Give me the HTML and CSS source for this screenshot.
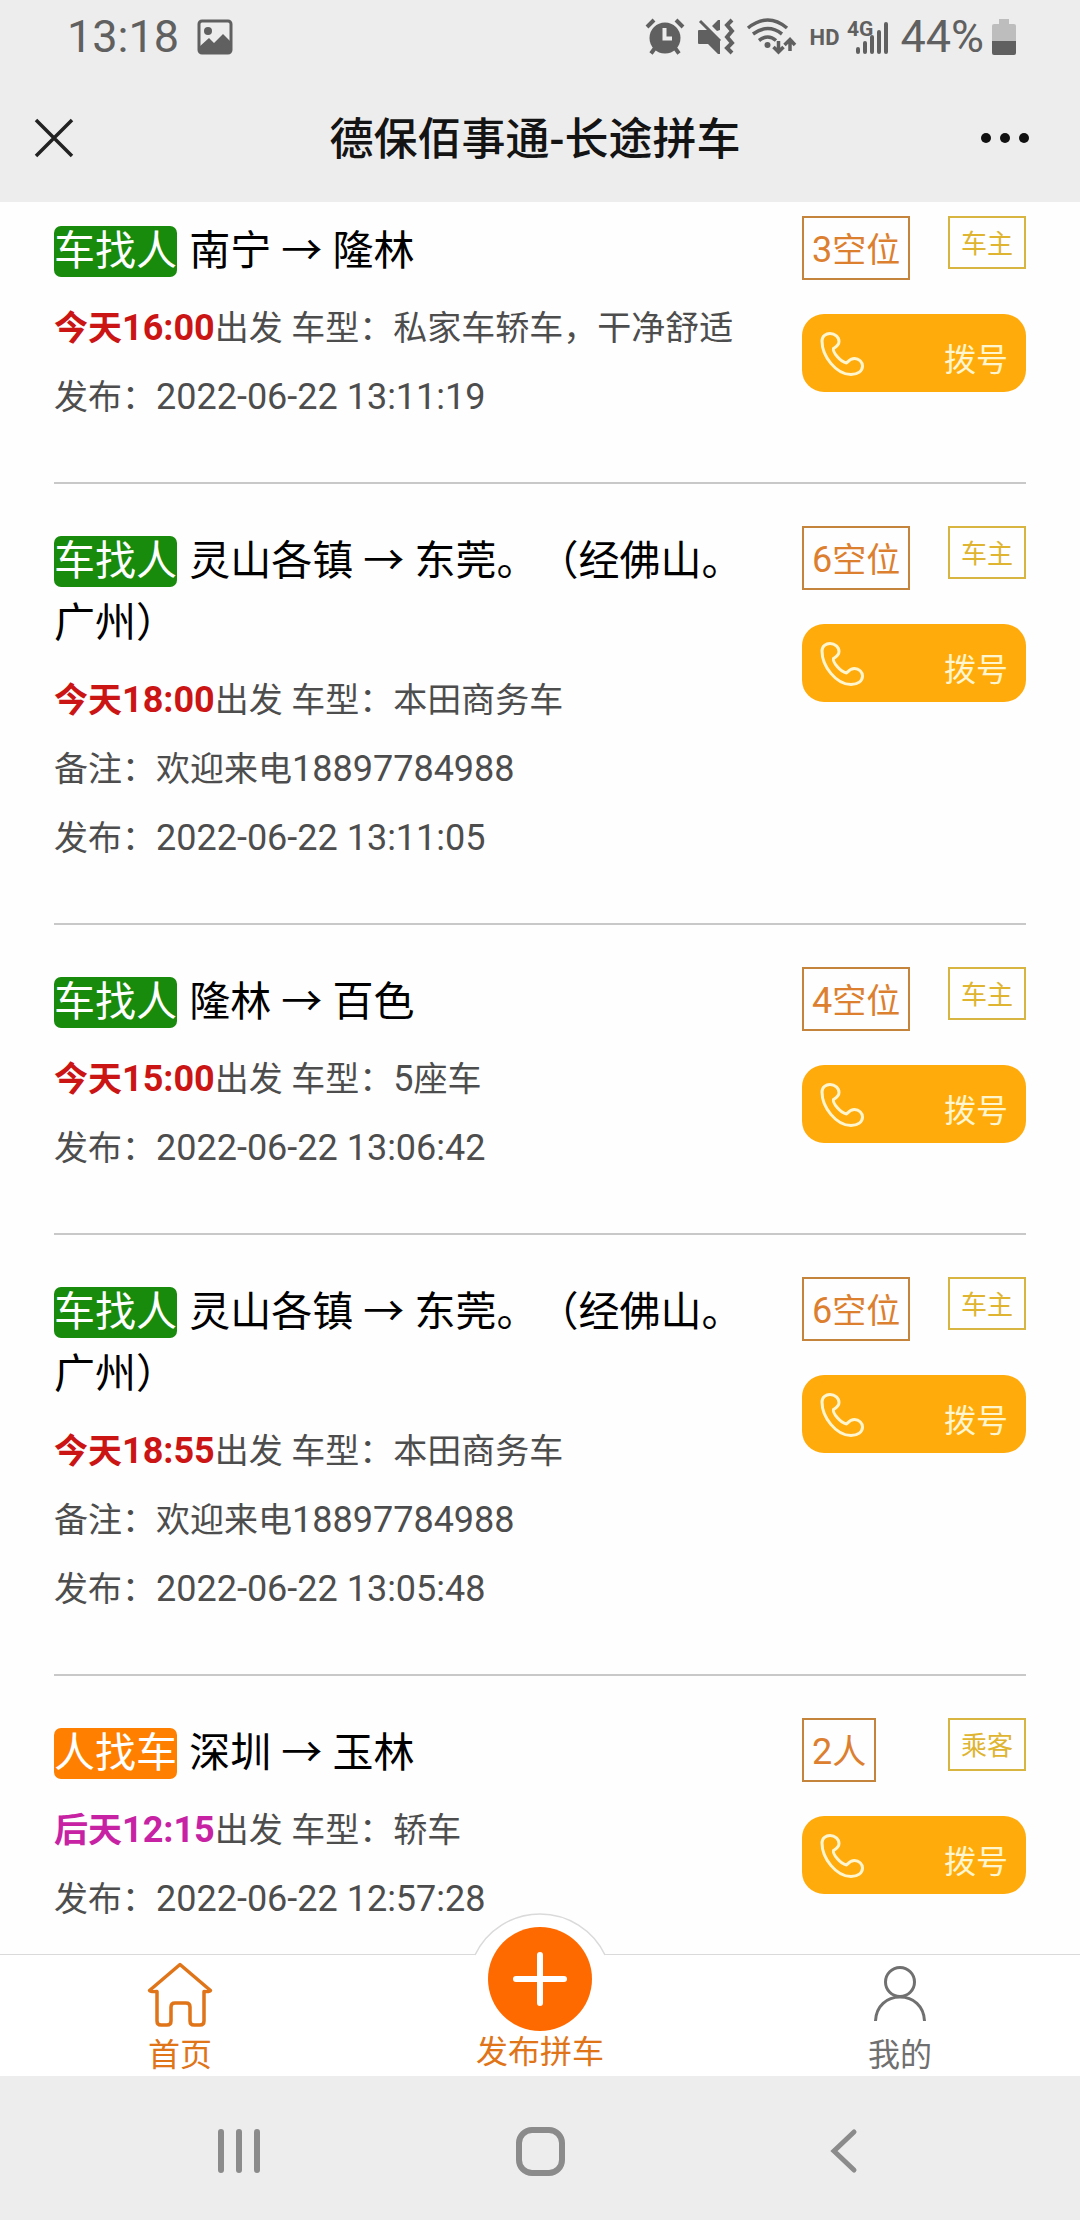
FILE: index.html
```html
<!DOCTYPE html>
<html lang="zh-CN">
<head>
<meta charset="utf-8">
<meta name="viewport" content="width=device-width, initial-scale=1">
<title>德保佰事通-长途拼车</title>
<link rel="stylesheet" href="styles.css">
</head>
<body>
<svg class="defs" aria-hidden="true">
  <symbol id="phone" viewBox="0 0 44 44">
    <path d="M2 9C2 4 6 1.500 10 1.500C15 1.500 19 5 19 9.500C19 13 16 15 13.500 16.500C12.500 20 20 29.500 26.500 31C28.500 29 30.500 26.500 34.500 26.500C39 26.500 42.500 30 42.500 34C42.500 39 38 42.500 31 42.500C16 42.500 2 24 2 9Z" fill="none" stroke="currentColor" stroke-width="3" stroke-linejoin="round"/>
  </symbol>
</svg>

<div class="status">
  <span class="status-time">13:18</span>
  <svg class="status-photo" width="36" height="36" viewBox="0 0 36 36" aria-hidden="true">
    <rect x="2" y="2" width="32" height="32" rx="3" fill="none" stroke="currentColor" stroke-width="3"/>
    <circle cx="11" cy="12" r="4" fill="currentColor"/>
    <path d="M2 28L12 19L17 24L26 15L34 23V34H2Z" fill="currentColor"/>
  </svg>
  <div class="status-icons">
    <svg width="44" height="38" viewBox="0 0 44 38" aria-hidden="true">
      <path d="M6 35.500L10 30M34 35.500L30 30M2 9L9 2M38 9L31 2" stroke="currentColor" stroke-width="4" fill="none"/>
      <circle cx="20" cy="20" r="15.500" fill="currentColor"/>
      <path d="M19.500 10V20.500H27" stroke="#ededed" stroke-width="4" fill="none"/>
    </svg>
    <svg width="41" height="38" viewBox="0 0 41 38" aria-hidden="true">
      <path d="M1 13Q1 12 2 12H12L23 23V36H21L11 26H2Q1 26 1 25ZM15 8L21 2H23V12L20 13Z" fill="currentColor"/>
      <path d="M3 3L23 23" stroke="currentColor" stroke-width="3"/>
      <path d="M35 2L30 7L35 13L30 19L35 25L30 30L35 35" fill="none" stroke="currentColor" stroke-width="4"/>
    </svg>
    <svg width="56" height="38" viewBox="0 0 56 38" aria-hidden="true">
      <g fill="none" stroke="currentColor" stroke-width="3.500">
        <path d="M2 10Q22 -6 41 10M7 16Q22 5 36 16M13 22.500Q22 15.500 30 22.500"/>
        <path d="M32.500 23V33M27.500 29L32.500 34L37.500 29M44 33V23M38.500 27L44 21.500L49 27"/>
      </g>
      <circle cx="21.500" cy="27" r="3" fill="currentColor"/>
    </svg>
    <span class="status-hd">HD</span>
    <svg width="45" height="38" viewBox="0 0 45 38" aria-hidden="true">
      <text x="0" y="18" class="net-label">4G</text>
      <path d="M11 31V34M18 25V34M25 19V34M32 14V34M39 6V34" fill="none" stroke="currentColor" stroke-width="4" stroke-linecap="round"/>
    </svg>
    <span class="status-power">44%</span>
    <svg width="24" height="38" viewBox="0 0 24 38" aria-hidden="true">
      <path d="M7 1H17V6H22Q24 6 24 8V23H0V8Q0 6 2 6H7Z" fill="#bdbdbd"/>
      <path d="M0 23H24V35Q24 37 22 37H2Q0 37 0 35Z" fill="currentColor"/>
    </svg>
  </div>
</div>

<header class="titlebar">
  <button class="icon-button" type="button" aria-label="关闭">
    <svg width="40" height="40" viewBox="0 0 40 40"><path d="M2 2L38 38M38 2L2 38" stroke="#222" stroke-width="3.500"/></svg>
  </button>
  <h1 class="title">德保佰事通-长途拼车</h1>
  <button class="icon-button" type="button" aria-label="更多">
    <svg width="50" height="12" viewBox="0 0 50 12"><g fill="#111"><circle cx="6" cy="6" r="5"/><circle cx="25" cy="6" r="5"/><circle cx="44" cy="6" r="5"/></g></svg>
  </button>
</header>

<main class="list">
  <article class="trip">
    <div class="info">
      <h2 class="route"><span class="kind">车找人</span> 南宁 → 隆林</h2>
      <p class="line"><strong class="when">今天<span class="num">16:00</span></strong>出发 车型：私家车轿车，干净舒适</p>
      <p class="line">发布：<time class="num">2022-06-22 13:11:19</time></p>
    </div>
    <div class="side">
      <div class="tags"><span class="seats"><span class="num">3</span>空位</span><span class="role">车主</span></div>
      <button class="call" type="button"><svg class="call-icon" aria-hidden="true"><use href="#phone"/></svg><span>拨号</span></button>
    </div>
  </article>

  <article class="trip">
    <div class="info">
      <h2 class="route"><span class="kind">车找人</span> 灵山各镇 → 东莞。（经佛山。广州）</h2>
      <p class="line"><strong class="when">今天<span class="num">18:00</span></strong>出发 车型：本田商务车</p>
      <p class="line">备注：欢迎来电<span class="num">18897784988</span></p>
      <p class="line">发布：<time class="num">2022-06-22 13:11:05</time></p>
    </div>
    <div class="side">
      <div class="tags"><span class="seats"><span class="num">6</span>空位</span><span class="role">车主</span></div>
      <button class="call" type="button"><svg class="call-icon" aria-hidden="true"><use href="#phone"/></svg><span>拨号</span></button>
    </div>
  </article>

  <article class="trip">
    <div class="info">
      <h2 class="route"><span class="kind">车找人</span> 隆林 → 百色</h2>
      <p class="line"><strong class="when">今天<span class="num">15:00</span></strong>出发 车型：<span class="num">5</span>座车</p>
      <p class="line">发布：<time class="num">2022-06-22 13:06:42</time></p>
    </div>
    <div class="side">
      <div class="tags"><span class="seats"><span class="num">4</span>空位</span><span class="role">车主</span></div>
      <button class="call" type="button"><svg class="call-icon" aria-hidden="true"><use href="#phone"/></svg><span>拨号</span></button>
    </div>
  </article>

  <article class="trip">
    <div class="info">
      <h2 class="route"><span class="kind">车找人</span> 灵山各镇 → 东莞。（经佛山。广州）</h2>
      <p class="line"><strong class="when">今天<span class="num">18:55</span></strong>出发 车型：本田商务车</p>
      <p class="line">备注：欢迎来电<span class="num">18897784988</span></p>
      <p class="line">发布：<time class="num">2022-06-22 13:05:48</time></p>
    </div>
    <div class="side">
      <div class="tags"><span class="seats"><span class="num">6</span>空位</span><span class="role">车主</span></div>
      <button class="call" type="button"><svg class="call-icon" aria-hidden="true"><use href="#phone"/></svg><span>拨号</span></button>
    </div>
  </article>

  <article class="trip">
    <div class="info">
      <h2 class="route"><span class="kind kind-rider">人找车</span> 深圳 → 玉林</h2>
      <p class="line"><strong class="when when-later">后天<span class="num">12:15</span></strong>出发 车型：轿车</p>
      <p class="line">发布：<time class="num">2022-06-22 12:57:28</time></p>
    </div>
    <div class="side">
      <div class="tags"><span class="seats"><span class="num">2</span>人</span><span class="role">乘客</span></div>
      <button class="call" type="button"><svg class="call-icon" aria-hidden="true"><use href="#phone"/></svg><span>拨号</span></button>
    </div>
  </article>
</main>

<nav class="tabs">
  <a class="tab tab-active" href="#home">
    <svg width="80" height="80" viewBox="0 0 80 80" aria-hidden="true">
      <path d="M40 9.500L9.500 35.500Q10 37 17 36.500V66Q17 70 21 70H27Q31 70 31 66V52Q31 48 35 48H46Q50 48 50 52V66Q50 70 54 70H60Q64 70 64 66V36.500Q70 37 70.500 35.500Z" fill="none" stroke="currentColor" stroke-width="3.500" stroke-linejoin="round"/>
    </svg>
    <span>首页</span>
  </a>
  <a class="tab tab-active" href="#publish">
    <svg class="publish-icon" width="144" height="120" viewBox="0 0 144 120" aria-hidden="true">
      <path d="M7 43A72 72 0 0 1 137 43V46H7Z" fill="#fff"/>
      <path d="M7 43A72 72 0 0 1 137 43" fill="none" stroke="#dadada" stroke-width="1.500"/>
      <circle cx="72" cy="67" r="52" fill="#ff6a00"/>
      <path d="M72 43V91M48 67H96" stroke="#fff" stroke-width="6" stroke-linecap="round"/>
    </svg>
    <span>发布拼车</span>
  </a>
  <a class="tab" href="#mine">
    <svg width="80" height="80" viewBox="0 0 80 80" aria-hidden="true">
      <g fill="none" stroke="currentColor" stroke-width="3"><circle cx="40" cy="27" r="14.500"/><path d="M15.500 66C16 51 27 42 40 42S64 51 64.500 66"/></g>
    </svg>
    <span>我的</span>
  </a>
</nav>

<div class="system-nav">
  <button class="icon-button" type="button" aria-label="最近任务"><svg width="50" height="50" viewBox="0 0 50 50"><path d="M8 6V44M26 6V44M44 6V44" stroke="#8b8b8b" stroke-width="6" stroke-linecap="round"/></svg></button>
  <button class="icon-button" type="button" aria-label="主屏幕"><svg width="50" height="50" viewBox="0 0 50 50"><rect x="4" y="4" width="43" height="43" rx="13" fill="none" stroke="#8b8b8b" stroke-width="6"/></svg></button>
  <button class="icon-button" type="button" aria-label="返回"><svg width="50" height="50" viewBox="0 0 50 50"><path d="M37 6L17 25L37 44" fill="none" stroke="#8b8b8b" stroke-width="5" stroke-linecap="round"/></svg></button>
</div>
</body>
</html>
```
FILE: styles.css
```css
* {
  box-sizing: border-box;
}

body {
  display: flex;
  flex-direction: column;
  min-height: 100vh;
  margin: 0;
  background: #fefefe;
  color: #4d4d4d;
  font-family: Roboto, "Noto Sans CJK SC", sans-serif;
  font-size: 34px;
  text-spacing-trim: space-all;
}

svg {
  display: block;
  flex: none;
}

button {
  padding: 0;
  border: 0;
  background: none;
  font: inherit;
  cursor: pointer;
}

.defs {
  position: absolute;
  width: 0;
  height: 0;
}

/* Phone status bar */
.status {
  display: flex;
  align-items: center;
  height: 74px;
  padding: 0 64px 0 67px;
  background: #ededed;
  color: #606060;
}

.status-time,
.status-power {
  font-size: 45px;
  line-height: 74px;
}

.status-photo {
  margin-left: 18px;
}

.status-icons {
  display: flex;
  align-items: center;
  gap: 8px;
  margin-left: auto;
}

.status-hd {
  font-size: 22px;
  font-weight: 700;
}

.net-label {
  fill: currentColor;
  font-size: 21px;
  font-weight: 700;
}

/* Page title bar */
.titlebar {
  display: grid;
  grid-template-columns: 56px 1fr 50px;
  align-items: center;
  height: 128px;
  padding: 0 50px 0 34px;
  background: #ededed;
}

.title {
  margin: 0;
  padding-top: 4px;
  color: #141414;
  font-size: 44px;
  font-weight: 500;
  line-height: 64px;
  text-align: center;
}

/* Trip list */
.list {
  flex: 1;
  padding: 0 54px;
}

.trip {
  display: flex;
  gap: 40px;
  padding: 42px 0 50px;
  border-bottom: 2px solid #c8c8c8;
}

.trip:first-child {
  padding-top: 14px;
}

.trip:last-child {
  padding-bottom: 18px;
  border-bottom: 0;
}

.info {
  flex: 1;
  padding-top: 4px;
}

.route {
  margin: 0 0 12px;
  color: #000;
  font-size: 41px;
  font-weight: 400;
  line-height: 62px;
}

.kind {
  display: inline-block;
  margin-right: 2px;
  border-radius: 7px;
  background: #188a0c;
  color: #fff;
  line-height: 51px;
}

.kind-rider {
  background: #ff8000;
}

.line {
  margin: 0;
  line-height: 69px;
}

.num {
  font-size: 36px;
}

.when {
  color: #cb1414;
}

.when-later {
  color: #c822a4;
}

.side {
  display: flex;
  flex: none;
  flex-direction: column;
  gap: 34px;
  width: 224px;
}

.tags {
  display: flex;
  align-items: flex-start;
  justify-content: space-between;
}

.seats {
  padding: 4px 8px 0;
  border: 2px solid #c4843c;
  color: #dc8030;
  line-height: 56px;
}

.role {
  padding: 4px 11px 0;
  border: 2px solid #d8b440;
  color: #deb430;
  font-size: 26px;
  line-height: 45px;
}

.call {
  display: flex;
  align-items: center;
  justify-content: space-between;
  height: 78px;
  padding: 8px 18px 0;
  border-radius: 22px;
  background: #ffab0c;
  color: #fff6cf;
  font-size: 32px;
}

.call-icon {
  align-self: flex-start;
  width: 44px;
  height: 44px;
  margin-top: 10px;
}

/* Bottom tabs */
.tabs {
  display: flex;
  padding-bottom: 1px;
  border-top: 1px solid #dadada;
  background: #fff;
}

.tab {
  display: flex;
  flex: 1;
  flex-direction: column;
  align-items: center;
  color: #707070;
  font-size: 32px;
  line-height: 40px;
  text-decoration: none;
}

.tab-active {
  color: #e07418;
}

.publish-icon {
  margin-top: -43px;
}

/* Phone navigation keys */
.system-nav {
  display: grid;
  grid-template-columns: repeat(3, 1fr);
  align-items: center;
  justify-items: center;
  height: 144px;
  padding: 6px 8% 0;
  background: #ededed;
}
```
